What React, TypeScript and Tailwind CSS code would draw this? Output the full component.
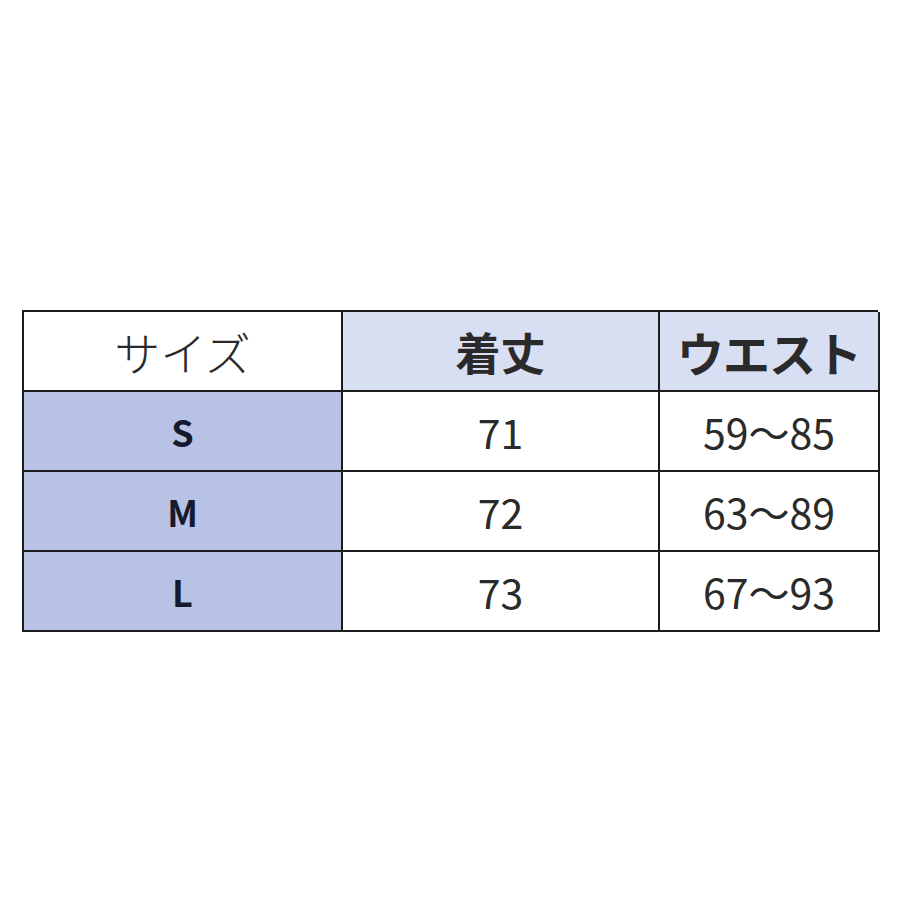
const rows = [
  { size: 'S', length: '71', waist: '59〜85' },
  { size: 'M', length: '72', waist: '63〜89' },
  { size: 'L', length: '73', waist: '67〜93' },
];

const font = { fontFamily: '"Noto Sans CJK JP", "Noto Sans", sans-serif' };

export default function App() {
  return (
    <div className="min-h-[900px] w-[900px] bg-white pt-[310px] pl-[22px]" style={font}>
      <div className="grid w-[856px] grid-cols-[319px_317px_220px] border-l-2 border-t-2 border-[#1c1c1c] text-[#2a2a2a]">
        <div className="flex h-[80px] items-center justify-center border-b-2 border-r-2 border-[#1c1c1c] bg-white text-[46px] font-light leading-none">
          サイズ
        </div>
        <div className="flex h-[80px] items-center justify-center border-b-2 border-r-2 border-[#1c1c1c] bg-[#d9dff3] text-[45px] font-bold leading-none">
          着丈
        </div>
        <div className="flex h-[80px] items-center justify-center border-b-2 border-r-2 border-[#1c1c1c] bg-[#d9dff3] text-[47px] font-bold leading-none tracking-[-1px]">
          ウエスト
        </div>
        {rows.map((r) => (
          <div key={r.size} className="contents">
            <div className="flex h-[80px] items-center justify-center border-b-2 border-r-2 border-[#1c1c1c] bg-[#b7c2e6] text-[36px] font-bold leading-none text-[#151a2c]">
              {r.size}
            </div>
            <div className="flex h-[80px] items-center justify-center border-b-2 border-r-2 border-[#1c1c1c] bg-white text-[41px] leading-none">
              {r.length}
            </div>
            <div className="flex h-[80px] items-center justify-center border-b-2 border-r-2 border-[#1c1c1c] bg-white text-[41px] leading-none">
              {r.waist}
            </div>
          </div>
        ))}
      </div>
    </div>
  );
}
